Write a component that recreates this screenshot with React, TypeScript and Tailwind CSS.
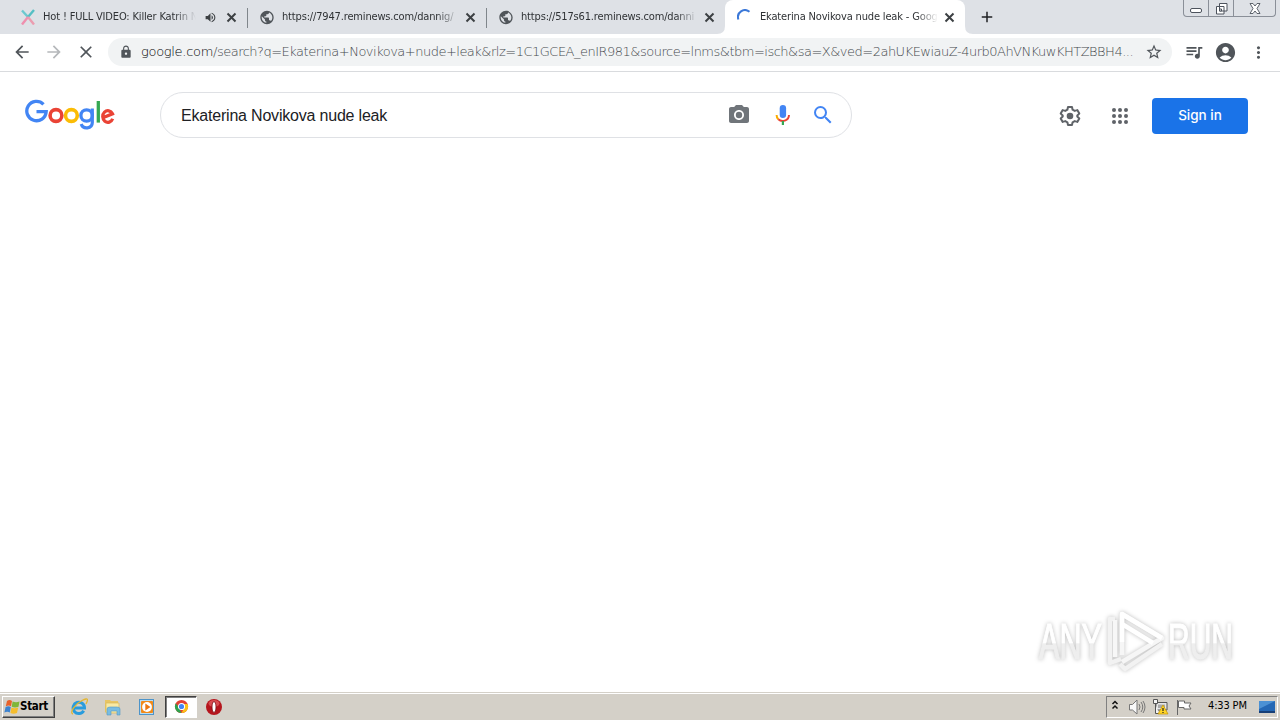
import type { ReactNode } from "react";
import {
  MdArrowBack,
  MdArrowForward,
  MdClose,
  MdLock,
  MdStarBorder,
  MdQueueMusic,
  MdAccountCircle,
  MdMoreVert,
  MdPublic,
  MdVolumeUp,
  MdAdd,
  MdPhotoCamera,
  MdSearch,
} from "react-icons/md";

function Tab({ icon, title, audio, width }: { icon: ReactNode; title: string; audio?: boolean; width: string }) {
  return (
    <div className={`flex h-[34px] shrink-0 items-center ${width}`}>
      <div className="flex w-4 shrink-0 justify-center">{icon}</div>
      <div className="ml-[7px] min-w-0 flex-1 overflow-hidden whitespace-nowrap [mask-image:linear-gradient(to_right,black_calc(100%-22px),transparent)]">
        {title}
      </div>
      {audio && <MdVolumeUp className="ml-[8px] mr-[3px] size-[13px] shrink-0 text-[#3c4043]" />}
      <svg viewBox="0 0 15 15" className="ml-[4px] mr-[8px] size-[15px] shrink-0" stroke="#3c4043" strokeWidth="2">
        <path d="M3.500 3.500 11.500 11.500M11.500 3.500 3.500 11.500" />
      </svg>
    </div>
  );
}

function XIcon() {
  return (
    <svg viewBox="0 0 16 16" className="size-4" fill="none" strokeWidth="2.4">
      <path d="M2 1.500 8 8" stroke="#6cc9cf" />
      <path d="M14 1 8 8" stroke="#55bfc4" />
      <path d="M8 8 2 15.500" stroke="#ef8fae" />
      <path d="M8 8 14 15.500" stroke="#eb9db0" />
    </svg>
  );
}

function GoogleLogo() {
  return (
    <svg viewBox="0 0 92 34" className="h-[34px] w-[92px]" fill="none" strokeWidth="3.600" role="img" aria-label="Google">
      <path d="M19.500 6.300A9.700 9.700 0 1 0 22.200 13.600H12.500" stroke="#4285f4" strokeWidth="3.300" />
      <circle cx="32" cy="17.500" r="5.900" stroke="#ea4335" />
      <circle cx="47.400" cy="17.500" r="5.900" stroke="#fbbc05" />
      <path d="M68.300 10.400V24.500C68.300 31 59 31.600 57.200 26" stroke="#4285f4" strokeWidth="3.200" />
      <circle cx="62.600" cy="17.500" r="5.700" stroke="#4285f4" strokeWidth="3.300" />
      <path d="M74.300 3V24.600" stroke="#34a853" strokeWidth="3.300" />
      <path d="M79.400 19.600 88.500 15.800A5.200 5.800 0 1 0 88.700 20.800" stroke="#ea4335" strokeWidth="3.200" />
    </svg>
  );
}

function MicIcon() {
  return (
    <svg viewBox="0 0 24 24" className="size-6">
      <rect x="8.700" y="2" width="6.400" height="13" rx="3.200" fill="#4285f4" />
      <path d="M5.600 12A6.300 6.300 0 0 0 7.300 16.300" fill="none" stroke="#f9ab00" strokeWidth="2" />
      <path d="M7.300 16.300C10.700 19.500 17.800 18 18 12" fill="none" stroke="#ea4335" strokeWidth="2" />
      <path d="M11.900 18V22" stroke="#34a853" strokeWidth="2.200" />
    </svg>
  );
}

function GearIcon() {
  return (
    <svg viewBox="0 0 24 24" className="size-6" fill="none" stroke="#5f6368" strokeWidth="2" strokeLinejoin="round">
      <path d="M10 3H14L14.600 5.700 16.700 6.900 19.300 6.100 21.300 9.600 19.300 11.500V12.500L21.300 14.400 19.300 17.900 16.700 17.100 14.600 18.300 14 21H10L9.400 18.300 7.300 17.100 4.700 17.900 2.700 14.400 4.700 12.500V11.500L2.700 9.600 4.700 6.100 7.300 6.900 9.400 5.700Z" />
      <circle cx="12" cy="12" r="3.300" fill="#5f6368" stroke="none" />
    </svg>
  );
}

function AppsIcon() {
  return (
    <svg viewBox="0 0 24 24" className="size-6" fill="#5f6368">
      {[6, 12, 18].map((y) => [6, 12, 18].map((x) => <circle key={`${x}-${y}`} cx={x} cy={y} r="2" />))}
    </svg>
  );
}

function Watermark() {
  return (
    <svg
      viewBox="0 0 210 76"
      className="absolute top-[602px] left-[1030px] h-[76px] w-[210px] drop-shadow-[0_0_2px_rgba(0,0,0,0.26)]"
    >
      <defs>
        <linearGradient id="fade" x1="0" y1="0" x2="0" y2="1">
          <stop offset="0.52" stopColor="#ffffff" />
          <stop offset="0.53" stopColor="#eeeeee" />
        </linearGradient>
      </defs>
      <g fill="url(#fade)" stroke="url(#fade)" strokeWidth="1.200" fontFamily="Liberation Sans, sans-serif" fontSize="50">
        <text x="9" y="57" textLength="63" lengthAdjust="spacingAndGlyphs">ANY</text>
        <text x="138" y="57" textLength="65" lengthAdjust="spacingAndGlyphs">RUN</text>
      </g>
      <g fill="none" stroke="#ffffff" strokeWidth="4.500" strokeLinejoin="round">
        <path d="M85 17H80V61L91 57M132 42 95 67 90 62" stroke="#f2f2f2" />
        <path d="M92 53V12L132 36 92 60" stroke="#f6f6f6" />
        <path d="M92 40V12L132 36" />
        <path d="M85 18V55" stroke="#f7f7f7" />
        <path d="M92 22 123 41" />
      </g>
    </svg>
  );
}

function WindowsFlag() {
  return (
    <svg viewBox="0 0 16 16" className="size-4 shrink-0">
      <path d="M3 2C5 .5 6.500 1 8 2L7 7.300C5.500 6.300 4 6.200 1.800 7.300Z" fill="#e8622b" />
      <path d="M8.600 2.500C11 3.500 13 3.500 15.500 2.500L14.500 7.800C12 8.800 10 8.800 7.700 7.800Z" fill="#7fb63a" />
      <path d="M1.600 8C3.500 7 5.300 7 6.800 8L5.800 13.500C4 12.500 2.500 12.500 .4 13.500Z" fill="#3d83cf" />
      <path d="M7.500 8.500C9.500 9.500 11.500 9.500 14.200 8.500L13 14C10.500 15 8.500 15 6.400 14Z" fill="#f5bd2d" />
    </svg>
  );
}

function IeIcon() {
  return (
    <svg viewBox="0 0 18 18" className="size-[18px]" fill="none">
      <path d="M4 10H14.500A5.700 5.700 0 1 0 13.700 12.800" stroke="#299cdd" strokeWidth="3" />
      <path d="M3 16C-1 15 5 6 12 2.500S18 2 16 6" stroke="#e4b630" strokeWidth="1.300" />
    </svg>
  );
}

function FolderIcon() {
  return (
    <svg viewBox="0 0 18 18" className="size-[18px]">
      <path d="M1 2H6L7 3H14V14H1Z" fill="#e8c565" />
      <path d="M2 5H15V15H2Z" fill="#f8e9a4" stroke="#d8b95a" strokeWidth=".7" />
      <path d="M3 17V11Q3 9 6 9H13Q16 9 16 11V17H13V13H7V17Z" fill="#78bce2" stroke="#5499c2" strokeWidth=".6" />
    </svg>
  );
}

function MediaIcon() {
  return (
    <svg viewBox="0 0 18 18" className="size-[18px]">
      <rect x="1.500" y="1.500" width="14" height="15" fill="#b8ddf4" stroke="#4d94c9" />
      <rect x="3" y="3" width="12" height="12" rx="1" fill="#f28a19" />
      <circle cx="9" cy="9" r="4.900" fill="#fff" />
      <path d="M7.300 5.600 12.500 9 7.300 12.400Z" fill="#ec7710" />
    </svg>
  );
}

function ChromeIcon() {
  return (
    <svg viewBox="0 0 16 16" className="size-[15px]">
      <circle cx="8" cy="8" r="7" fill="#e34133" />
      <path d="M2 4.400 6 11 8 15A7 7 0 0 1 2 4.400Z" fill="#2da44e" />
      <path d="M14.500 5.200H8L10.500 10 8 15A7 7 0 0 0 14.500 5.200Z" fill="#fbc116" />
      <circle cx="8" cy="8" r="3.300" fill="#4285f4" stroke="#fff" strokeWidth="1.100" />
    </svg>
  );
}

function OperaIcon() {
  return (
    <svg viewBox="0 0 18 18" className="size-[18px]">
      <circle cx="9" cy="9" r="8" fill="#b5151d" />
      <ellipse cx="9" cy="5.500" rx="5.500" ry="3.500" fill="#d94c50" />
      <ellipse cx="9" cy="9" rx="2" ry="5.500" fill="#fff" stroke="#77090f" strokeWidth=".8" />
    </svg>
  );
}

function TrayIcons() {
  return (
    <>
      <svg viewBox="0 0 8 12" className="ml-[4px] mb-[3px] h-3 w-2 shrink-0" fill="none" stroke="#111" strokeWidth="1.500">
        <path d="M1.500 5 4 2.500 6.500 5M1.500 9.500 4 7 6.500 9.500" />
      </svg>
      <svg viewBox="0 0 18 18" className="ml-[9px] size-[18px] shrink-0" fill="none" stroke="#777">
        <path d="M1.500 6.500H4.500L9 2V16L4.500 12H1.500Z" fill="#f8f8f8" />
        <path d="M11 6Q13 9 11 12M13 4Q16.500 9 13 14M15 3Q19 9 15 15" />
      </svg>
      <svg viewBox="0 0 18 18" className="ml-[5px] size-[18px] shrink-0">
        <path d="M5 4.500H16V12H5Z" fill="#e7e7e7" stroke="#555" />
        <path d="M7 6.500H14V10H7Z" fill="#aaa" />
        <path d="M2.500 1.500H6.500V5.500H2.500ZM4.500 6V15.500H8" fill="#f4f4f4" stroke="#555" />
        <path d="M12 7 17 16H7Z" fill="#ffd527" stroke="#c49400" strokeWidth=".7" />
        <path d="M12 10V13M12 14V15" stroke="#222" strokeWidth="1.200" />
      </svg>
      <svg viewBox="0 0 18 18" className="ml-[6px] size-[18px] shrink-0" fill="#fff" stroke="#666">
        <path d="M2.500 2V17M3.500 3H9.500V5H16L14 8 16 11H9V9.500H3.500Z" />
      </svg>
    </>
  );
}

export default function App() {
  return (
    <div className="relative flex h-[720px] w-[1280px] flex-col overflow-hidden bg-white font-['Liberation_Sans',sans-serif]">
      <header className="shrink-0">
        <div className="flex h-[34px] items-start bg-[#dee1e6] pl-5 font-['DejaVu_Sans_Condensed','DejaVu_Sans',sans-serif] text-[11px] tracking-[-0.16px] text-[#2f3235] [font-stretch:condensed]">
          <Tab width="w-[227px]" icon={<XIcon />} title="Hot ! FULL VIDEO: Killer Katrin N" audio />
          <div className="mt-2 h-5 w-px bg-[#80868b]" />
          <div className="w-[11px]" />
          <Tab width="w-[227px]" icon={<MdPublic className="size-[17px] text-[#50555a]" />} title="https://7947.reminews.com/dannig/" />
          <div className="mt-2 h-5 w-px bg-[#80868b]" />
          <div className="w-[11px]" />
          <Tab width="w-[227px]" icon={<MdPublic className="size-[17px] text-[#50555a]" />} title="https://517s61.reminews.com/danni" />
          <div className="relative flex h-[34px] w-[240px] rounded-t-lg bg-white pl-3">
            <svg viewBox="0 0 256 8" className="absolute bottom-0 -left-2 h-2 w-64" fill="#fff">
              <path d="M0 8Q8 8 8 0V8ZM256 8Q248 8 248 0V8Z" />
            </svg>
            <Tab
              width="w-[228px]"
              icon={
                <svg viewBox="0 0 16 16" className="size-4" fill="none" stroke="#3b78d8" strokeWidth="2">
                  <path d="M1.400 10.500A7 7 0 0 1 12.500 2.800" />
                </svg>
              }
              title="Ekaterina Novikova nude leak - Goog"
            />
          </div>
          <MdAdd className="ml-[13px] mt-2 size-[18px] text-[#202124]" />
          <div className="ml-auto mr-[4px] flex h-[17px] w-[93px] rounded-b-[4px] border border-t-0 border-[#8a8f98]">
            <div className="flex w-[25px] items-center justify-center border-r border-[#8a8f98]">
              <div className="mt-1 h-[5px] w-3 rounded-[2px] border border-[#4d535d] bg-white" />
            </div>
            <div className="flex w-[25px] items-center justify-center border-r border-[#8a8f98]">
              <svg viewBox="0 0 13 13" className="size-[13px]" fill="#fff" stroke="#4d535d">
                <path d="M4.500 1.500H12V9H4.500ZM1.500 4.500H9V12H1.500Z" />
                <path d="M4.500 7H6.500V9H4.500Z" />
              </svg>
            </div>
            <div className="flex flex-1 items-center justify-center">
              <svg viewBox="0 0 12 11" className="h-[11px] w-3" fill="#fff" stroke="#4d535d" strokeWidth=".9">
                <path d="M1 .5H4L6 3 8 .5H11L8 5.500 11 10.500H8L6 8 4 10.500H1L4 5.500Z" />
              </svg>
            </div>
          </div>
        </div>
        <div className="flex h-[38px] items-center border-b border-[#d9dbde] pb-px pl-3">
          <MdArrowBack className="size-5 text-[#50555a]" />
          <MdArrowForward className="ml-3 size-5 text-[#b5b8bb]" />
          <MdClose className="ml-3 size-5 text-[#50555a]" />
          <div className="ml-3 flex h-7 w-[1064px] items-center rounded-full bg-[#f1f3f4]">
            <MdLock className="ml-[11px] size-[14px] text-[#50555a]" />
            <div className="ml-2 w-[1004px] whitespace-nowrap font-['DejaVu_Sans',sans-serif] text-[13px] font-extralight tracking-[-0.505px] text-[#45494d]">
              <span className="tracking-[-0.3px] text-black">google.com</span>/search?q=Ekaterina+Novikova+nude+leak&amp;rlz=1C1GCEA_enIR981&amp;source=lnms&amp;tbm=isch&amp;sa=X&amp;ved=2ahUKEwiauZ-4urb0AhVNKuwKHTZBBH4...
            </div>
            <MdStarBorder className="size-[18px] shrink-0 text-[#50555a]" />
          </div>
          <MdQueueMusic className="ml-3 size-5 text-[#50555a]" />
          <MdAccountCircle className="ml-[10px] size-[23px] text-[#50555a]" />
          <MdMoreVert className="ml-[12px] size-[19px] text-[#50555a]" />
        </div>
      </header>
      <main className="flex flex-1 items-start pt-5">
        <div className="ml-6 mt-[6px] w-[136px]"><GoogleLogo /></div>
        <div className="flex h-[46px] w-[692px] items-center rounded-full border border-[#dfe1e5] pl-5">
          <div className="w-[546px] pt-px text-[16px] tracking-[-0.2px] text-[#202124]">Ekaterina Novikova nude leak</div>
          <MdPhotoCamera className="size-6 text-[#70757a]" />
          <div className="ml-5"><MicIcon /></div>
          <MdSearch className="ml-[16px] size-[24px] text-[#4285f4]" />
        </div>
        <div className="ml-[206px] mt-3"><GearIcon /></div>
        <div className="ml-[26px] mt-3"><AppsIcon /></div>
        <button className="ml-5 mt-[6px] h-9 w-24 rounded-[4px] bg-[#1a73e8] pb-px font-['Inter',sans-serif] text-[13.5px] font-medium text-white">Sign in</button>
      </main>
      <Watermark />
      <footer className="flex h-[28px] shrink-0 items-center border-t border-[#d4d0c8] bg-[#d4d0c8] pl-[2px] shadow-[inset_0_1px_0_#fff]">
        <div className="flex h-[22px] w-[53px] items-center border border-t-white border-r-[#404040] border-b-[#404040] border-l-white pl-px font-['DejaVu_Sans_Condensed','DejaVu_Sans',sans-serif] text-[11.5px] font-bold tracking-[-0.3px] text-black shadow-[inset_-1px_-1px_0_#808080]">
          <WindowsFlag />
          <span>Start</span>
        </div>
        <div className="ml-[15px]"><IeIcon /></div>
        <div className="ml-4"><FolderIcon /></div>
        <div className="ml-4"><MediaIcon /></div>
        <div className="ml-[9px] flex h-[22px] w-8 items-center justify-center border border-t-[#404040] border-r-white border-b-white border-l-[#404040] bg-white shadow-[inset_1px_1px_0_#808080]"><ChromeIcon /></div>
        <div className="ml-[8px]"><OperaIcon /></div>
        <div className="ml-auto mr-[2px] flex h-[22px] w-[172px] items-center border border-t-[#808080] border-r-white border-b-white border-l-[#808080]">
          <TrayIcons />
          <div className="ml-[15px] w-[44px] whitespace-nowrap font-['DejaVu_Sans_Condensed','DejaVu_Sans',sans-serif] text-[11px] tracking-[-0.15px] text-black">4:33 PM</div>
          <svg viewBox="0 0 16 14" className="ml-[7px] h-[14px] w-4 shrink-0">
            <path d="M0 1H16V11H0Z" fill="#2468b5" />
            <path d="M0 1H16L0 9Z" fill="#4b91d4" />
            <path d="M0 11H16V13H0Z" fill="#173f77" />
          </svg>
        </div>
      </footer>
    </div>
  );
}
